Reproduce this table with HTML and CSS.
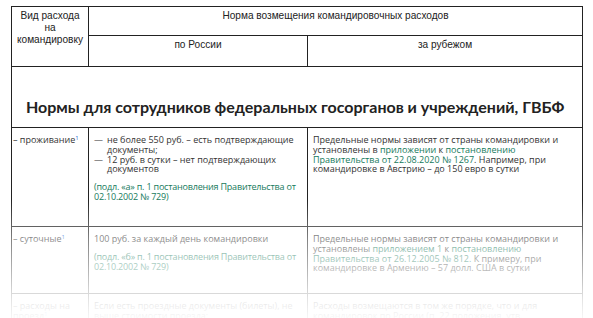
FILE: index.html
```html
<!DOCTYPE html>
<html lang="ru">
<head>
<meta charset="utf-8">
<title>Нормы командировочных расходов</title>
<link rel="stylesheet" href="styles.css">
</head>
<body>
<div class="page">
  <table class="norms">
    <colgroup>
      <col class="c1">
      <col class="c2">
      <col class="c3">
    </colgroup>
    <thead>
      <tr class="h1">
        <th rowspan="2" class="kind">Вид расхода на командировку</th>
        <th colspan="2">Норма возмещения командировочных расходов</th>
      </tr>
      <tr class="h2">
        <th>по России</th>
        <th>за рубежом</th>
      </tr>
    </thead>
    <tbody>
      <tr class="section">
        <td colspan="3"><h2>Нормы для сотрудников федеральных госорганов и учреждений, ГВБФ</h2></td>
      </tr>
      <tr class="r1">
        <td class="name">– проживание<sup>1</sup></td>
        <td class="ru">
          <ul class="dash">
            <li>не более 550 руб. – есть подтверждающие документы;</li>
            <li>12 руб. в сутки – нет подтверждающих документов</li>
          </ul>
          <p class="src"><a href="#">(подл. «а» п. 1 постановления Правительства от 02.10.2002 № 729)</a></p>
        </td>
        <td><p>Предельные нормы зависят от страны командировки и установлены в <a href="#">приложении</a> к <a href="#">постановлению Правительства от 22.08.2020 № 1267</a>. Например, при командировке в Австрию – до 150 евро в сутки</p></td>
      </tr>
      <tr class="r2">
        <td class="name">– суточные<sup>1</sup></td>
        <td class="ru">
          <p>100 руб. за каждый день командировки</p>
          <p class="src"><a href="#">(подл. «б» п. 1 постановления Правительства от 02.10.2002 № 729)</a></p>
        </td>
        <td><p>Предельные нормы зависят от страны командировки и установлены <a href="#">приложением 1</a> к <a href="#">постановлению Правительства от 26.12.2005 № 812.</a> К примеру, при командировке в Армению – 57 долл. США в сутки</p></td>
      </tr>
      <tr class="r3">
        <td class="name">– расходы на проезд<sup>1</sup></td>
        <td class="ru"><p>Если есть проездные документы (билеты), не выше стоимости проезда:</p></td>
        <td><p>Расходы возмещаются в том же порядке, что и для командировок по России (п. 22 положения, утв. постановлением Правительства)</p></td>
      </tr>
    </tbody>
  </table>
  <div class="fade"></div>
</div>
</body>
</html>
```

FILE: styles.css
```css
html, body {
  margin: 0;
  padding: 0;
  background: #fff;
}
body {
  font-family: "Open Sans", "Noto Sans", sans-serif;
  color: #333;
  overflow: hidden;
  height: 318px;
}
.page {
  position: relative;
  height: 318px;
  overflow: hidden;
  padding: 6px 11px 0 11px;
  box-sizing: border-box;
}
.norms {
  border-collapse: collapse;
  width: 571px;
  table-layout: fixed;
  font-size: 9px;
  line-height: 9.8px;
}
.c1 { width: 77px; }
.c2 { width: 219px; }
.c3 { width: 275px; }
.norms th, .norms td {
  border: 1px solid #222;
  vertical-align: top;
  text-align: left;
}
.norms th {
  font-weight: 400;
  text-align: center;
  font-size: 10.1px;
  line-height: 12px;
  padding: 3px 4px 0;
  color: #222;
  font-family: "Liberation Sans", Arial, sans-serif;
}
.h1 { height: 29px; }
.h2 { height: 31px; }
.norms td {
  padding: 7px 5px 0 5px;
}
.norms .section td {
  padding: 30px 10px 10px 14px;
}
.section h2 {
  margin: 0;
  font-family: "Lato", "Open Sans", sans-serif;
  font-weight: 700;
  font-size: 16px;
  line-height: 20px;
  color: #222;
  white-space: nowrap;
}
.norms td.name {
  padding-left: 1px;
  padding-right: 2px;
}
.norms td.ru {
  padding-right: 2px;
}
.r1 { height: 99px; }
.r2 { height: 67px; }
.norms p {
  margin: 0;
}
.norms p.src {
  margin-top: 8px;
  letter-spacing: -0.2px;
}
.dash {
  list-style: none;
  margin: 0;
  padding: 0;
}
.dash li {
  position: relative;
  padding-left: 13px;
}
.dash li::before {
  content: "—";
  position: absolute;
  left: 0;
  top: 0;
}
a {
  color: #167a5c;
  text-decoration: none;
}
sup {
  font-size: 6px;
  line-height: 0;
  color: #2a6fd6;
  vertical-align: 3px;
}
.fade {
  position: absolute;
  left: 0;
  right: 0;
  top: 200px;
  bottom: 0;
  background: linear-gradient(to bottom, rgba(255,255,255,0) 0%, rgba(255,255,255,0.45) 35%, rgba(255,255,255,0.88) 85%, rgba(255,255,255,0.96) 100%);
  pointer-events: none;
}
```
